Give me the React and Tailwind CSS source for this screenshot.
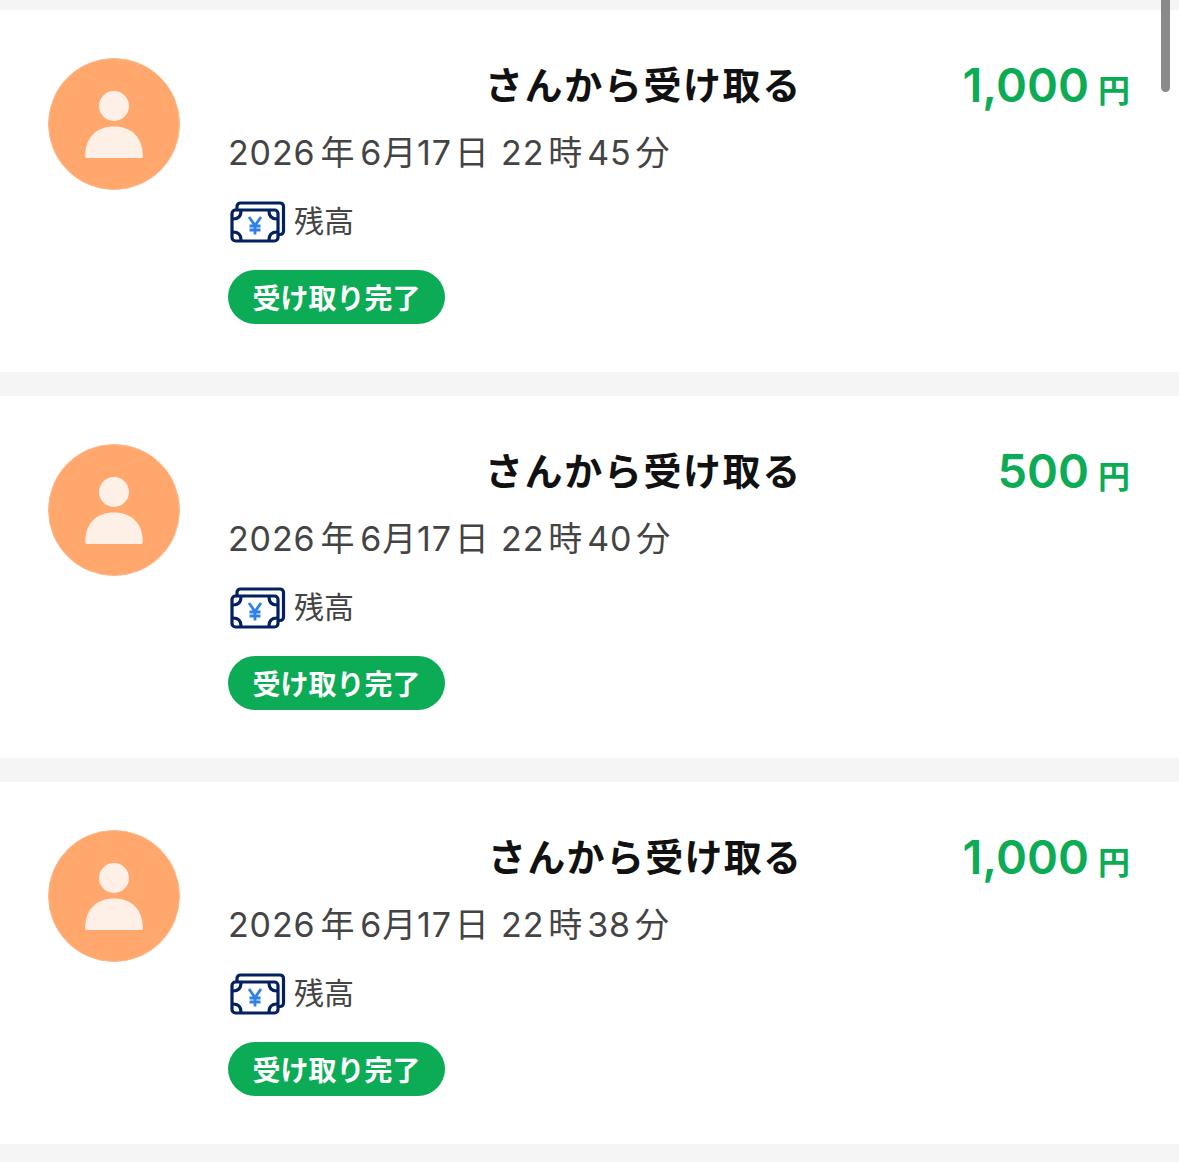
const font = { fontFamily: '"Noto Sans CJK JP", "Noto Sans", sans-serif' };
const latin = { fontFamily: 'Inter, "Noto Sans CJK JP", sans-serif' };

function Avatar() {
  return (
    <div className="w-[132px] h-[132px] shrink-0 rounded-full bg-[#ffa76c] border border-[#fbb98c] flex items-center justify-center">
      <svg width="60" height="68" viewBox="0 0 60 68" className="mt-[1px]">
        <circle cx="30" cy="15" r="15" fill="#fff0e7" />
        <path d="M1.200 65C1.200 46 13 35.500 30 35.500S58.800 46 58.800 65C58.800 66.400 58 67 56.800 67H3.200C2 67 1.200 66.400 1.200 65Z" fill="#fff0e7" />
      </svg>
    </div>
  );
}

function Money() {
  return (
    <svg width="56" height="42" viewBox="0 0 56 42" fill="none" className="shrink-0">
      <path d="M7 8V5.500C7 3.500 8.500 2 10.500 2H50C52 2 53.500 3.500 53.500 5.500V30C53.500 32 52 33.500 50 33.500H48" stroke="#03215f" strokeWidth="3.200" />
      <rect x="2" y="9" width="46" height="31" rx="3.500" fill="#fff" stroke="#03215f" strokeWidth="3.200" />
      <path d="M3 18C8.500 18 11 15.500 11 10M47 18C41.500 18 39 15.500 39 10M3 31C8.500 31 11 33.500 11 39M47 31C41.500 31 39 33.500 39 39" stroke="#03215f" strokeWidth="3.200" />
      <path d="M19 16L25 24.500L31 16M25 24.500V33.500M19.500 25H30.500M19.500 29H30.500" stroke="#2f80e8" strokeWidth="2.800" />
    </svg>
  );
}

function When({ time }) {
  const s = "mx-[5px]";
  return (
    <span className="tracking-[0.85px]">
      2026<span className={s}>年</span>6<span>月</span>17<span className="ml-[3px] mr-[1px]">日</span> 22<span className="mx-[4px]">時</span>{time}<span className="ml-[4px]">分</span>
    </span>
  );
}

function Row({ amount, time, titleClass }) {
  return (
    <div className="bg-white h-[362px] flex pl-12 pr-[49px] pt-[48px] gap-12">
      <Avatar />
      <div className="flex-1 min-w-0">
        <div className="flex items-start justify-between h-[56px]">
          <div className={`text-[38px] leading-[56px] font-bold text-[#111111] whitespace-nowrap -mt-[3px] ${titleClass}`}>
            さんから受け取る
          </div>
          <div className="flex items-baseline text-[#0cab55] leading-[56px] -mt-[1px]">
            <span className="text-[47px] font-semibold" style={latin}>{amount}</span>
            <span className="text-[32px] font-bold ml-[9px]">円</span>
          </div>
        </div>
        <div className="mt-[14px] text-[34px] leading-[50px] text-[#444444] whitespace-nowrap" style={latin}>
          <When time={time} />
        </div>
        <div className="mt-[23px] ml-[2px] flex items-center h-[42px] gap-[8px]">
          <Money />
          <span className="text-[30px] leading-[42px] text-[#444444] mb-[6px]">残高</span>
        </div>
        <div className="mt-[27px] w-[217px] h-[54px] rounded-full bg-[#0cab55] text-white text-[28px] font-semibold flex items-center justify-center">
          受け取り完了
        </div>
      </div>
    </div>
  );
}

export default function App() {
  return (
    <div className="relative w-[1179px] h-[1162px] overflow-hidden bg-[#f5f5f5] pt-[10px] flex flex-col gap-[24px]" style={font}>
      <Row amount="1,000" time="45" titleClass="ml-[257px] tracking-[1.6px]" />
      <Row amount="500" time="40" titleClass="ml-[257px] tracking-[1.6px]" />
      <Row amount="1,000" time="38" titleClass="ml-[260px] tracking-[1.3px]" />
      <div className="absolute right-[9px] top-0 w-[9px] h-[92px] rounded-b-full bg-[#8a8a8a]" />
    </div>
  );
}
